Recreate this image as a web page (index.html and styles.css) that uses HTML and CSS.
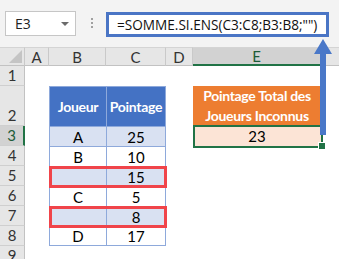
FILE: index.html
```html
<!DOCTYPE html>
<html lang="fr">
<head>
<meta charset="utf-8">
<title>SOMME.SI.ENS</title>
<link rel="stylesheet" href="styles.css">
</head>
<body>
<div class="app">
  <div class="formula-bar">
    <div class="name-box"><span>E3</span><span class="caret"></span></div>
    <div class="grip"><i></i><i></i><i></i></div>
    <div class="formula-input">=SOMME.SI.ENS(C3:C8;B3:B8;"")</div>
  </div>

  <div class="sheet">
    <!-- column headers -->
    <div class="hdr corner"><span class="corner-tri"></span></div>
    <div class="hdr col">A</div>
    <div class="hdr col">B</div>
    <div class="hdr col">C</div>
    <div class="hdr col">D</div>
    <div class="hdr col active-col">E</div>
    <div class="hdr col last"></div>

    <!-- row 1 -->
    <div class="hdr row">1</div>
    <div class="cell span6"></div>

    <!-- row 2 -->
    <div class="hdr row">2</div>
    <div class="cell"></div>
    <div class="cell th">Joueur</div>
    <div class="cell th">Pointage</div>
    <div class="cell"></div>
    <div class="cell th-orange"><span>Pointage Total des</span><span>Joueurs Inconnus</span></div>
    <div class="cell"></div>

    <!-- row 3 -->
    <div class="hdr row active-row">3</div>
    <div class="cell"></div>
    <div class="cell td band">A</div>
    <div class="cell td band">25</div>
    <div class="cell"></div>
    <div class="cell result selected">23</div>
    <div class="cell"></div>

    <!-- row 4 -->
    <div class="hdr row">4</div>
    <div class="cell"></div>
    <div class="cell td">B</div>
    <div class="cell td">10</div>
    <div class="cell span3"></div>

    <!-- row 5 -->
    <div class="hdr row">5</div>
    <div class="cell"></div>
    <div class="cell td band"></div>
    <div class="cell td band">15</div>
    <div class="cell span3"></div>

    <!-- row 6 -->
    <div class="hdr row">6</div>
    <div class="cell"></div>
    <div class="cell td">C</div>
    <div class="cell td">5</div>
    <div class="cell span3"></div>

    <!-- row 7 -->
    <div class="hdr row">7</div>
    <div class="cell"></div>
    <div class="cell td band"></div>
    <div class="cell td band">8</div>
    <div class="cell span3"></div>

    <!-- row 8 -->
    <div class="hdr row">8</div>
    <div class="cell"></div>
    <div class="cell td last-row">D</div>
    <div class="cell td last-row">17</div>
    <div class="cell span3"></div>

    <!-- row 9 -->
    <div class="hdr row">9</div>
    <div class="cell span6"></div>

    <!-- blank name highlights -->
    <div class="mark mark-r5"></div>
    <div class="mark mark-r7"></div>
  </div>

  <!-- arrow pointing from the result cell up to the formula -->
  <svg class="arrow" width="20" height="96" viewBox="0 0 20 96">
    <rect x="6" y="14" width="6" height="82" fill="#4a78c8"/>
    <polygon points="9,0 18,15 0,15" fill="#4a78c8"/>
  </svg>
</div>
</body>
</html>
```

FILE: styles.css
```css
* {
  box-sizing: border-box;
}

html, body {
  margin: 0;
  padding: 0;
  background: #ffffff;
}

body {
  font-family: Lato, "Open Sans", "Liberation Sans", sans-serif;
  font-size: 14px;
  color: #000;
}

.app {
  position: relative;
  width: 339px;
  height: 259px;
  overflow: hidden;
}

/* ---------- formula bar ---------- */
.formula-bar {
  display: flex;
  align-items: flex-start;
  height: 47px;
  padding: 11px 0 0 5px;
  background: #f3f3f3;
}

.name-box {
  display: flex;
  align-items: center;
  justify-content: space-between;
  width: 71px;
  height: 25px;
  padding: 0 6px 0 9px;
  background: #fff;
  border: 1px solid #c6c6c6;
  font-family: "Open Sans", "Liberation Sans", sans-serif;
  font-size: 14px;
  color: #222;
}

.caret {
  width: 0;
  height: 0;
  border-left: 4px solid transparent;
  border-right: 4px solid transparent;
  border-top: 4px solid #6b6b6b;
  margin-top: 1px;
}

.grip {
  display: flex;
  flex-direction: column;
  gap: 2px;
  width: 30px;
  padding: 7px 0 0 15px;
}

.grip i {
  display: block;
  width: 2px;
  height: 2px;
  background: #a0a0a0;
}

.formula-input {
  width: 223px;
  height: 25px;
  margin-top: 1px;
  padding: 0 0 0 8px;
  background: #fff;
  border: 3px solid #4a75c5;
  font-family: "Open Sans", "Liberation Sans", sans-serif;
  font-size: 13.6px;
  line-height: 19px;
  color: #111;
  white-space: nowrap;
}

/* ---------- worksheet grid ---------- */
.sheet {
  position: relative;
  display: grid;
  grid-template-columns: 25px 24px 57px 60px 27px 128px 1fr;
  grid-template-rows: 19px 20px 40px repeat(7, 20px);
}

.hdr {
  display: flex;
  align-items: center;
  justify-content: center;
  background: #e6e6e6;
  color: #333;
  font-family: Lato, "Open Sans", sans-serif;
  font-size: 15px;
}

.hdr.col {
  border-right: 1px solid #c9c9c9;
  border-bottom: 1px solid #c2c2c2;
  border-top: 1px solid #d4d4d4;
}

.hdr.col.last {
  border-right: none;
}

.hdr.corner {
  position: relative;
  border-right: 1px solid #c9c9c9;
  border-bottom: 1px solid #c2c2c2;
  border-top: 1px solid #d4d4d4;
}

.corner-tri {
  position: absolute;
  right: 2px;
  bottom: 2px;
  width: 0;
  height: 0;
  border-left: 13px solid transparent;
  border-bottom: 13px solid #c4c4c4;
}

.hdr.row {
  align-items: flex-end;
  padding-bottom: 1px;
  border-right: 1px solid #c2c2c2;
  border-bottom: 1px solid #cfcfcf;
}

.hdr.active-col {
  background: #d2d2d2;
  color: #1e5c38;
  border-bottom: 2px solid #217346;
}

.hdr.active-row {
  background: #d2d2d2;
  color: #1e5c38;
  border-right: 2px solid #217346;
}

.cell {
  display: flex;
  align-items: center;
  justify-content: center;
  background: #fff;
  font-size: 15px;
}

.span3 { grid-column: span 3; }
.span6 { grid-column: span 6; }

.th {
  background: #4472c4;
  color: #fff;
  font-weight: 700;
  font-size: 14px;
  letter-spacing: -0.3px;
  border-left: 1px solid #8ea9db;
  border-top: 1px solid #8ea9db;
}

.th + .th {
  border-right: 1px solid #8ea9db;
}

.td {
  border-left: 1px solid #8ea9db;
  border-top: 1px solid #8ea9db;
}

.td + .td {
  border-right: 1px solid #8ea9db;
}

.td.band {
  background: #d9e1f2;
}

.td.last-row {
  border-bottom: 1px solid #8ea9db;
}

.th-orange {
  flex-direction: column;
  background: #ed7d31;
  color: #fff;
  font-weight: 700;
  font-size: 14px;
  letter-spacing: -0.3px;
  line-height: 20px;
  white-space: nowrap;
}

.result {
  background: #fce4d6;
}

.selected {
  position: relative;
}

.selected::before {
  content: "";
  position: absolute;
  left: 0;
  top: -1px;
  right: -2px;
  bottom: -2px;
  border: 2px solid #217346;
}

.selected::after {
  content: "";
  position: absolute;
  right: -5px;
  bottom: -4px;
  width: 6px;
  height: 6px;
  background: #217346;
  border: 1px solid #fff;
}

/* red frames around rows with no player name */
.mark {
  position: absolute;
  left: 49px;
  width: 118px;
  height: 22px;
  border: 3px solid #f0444a;
}

.mark-r5 { top: 119px; }
.mark-r7 { top: 159px; }

.arrow {
  position: absolute;
  left: 314px;
  top: 39px;
}
```
